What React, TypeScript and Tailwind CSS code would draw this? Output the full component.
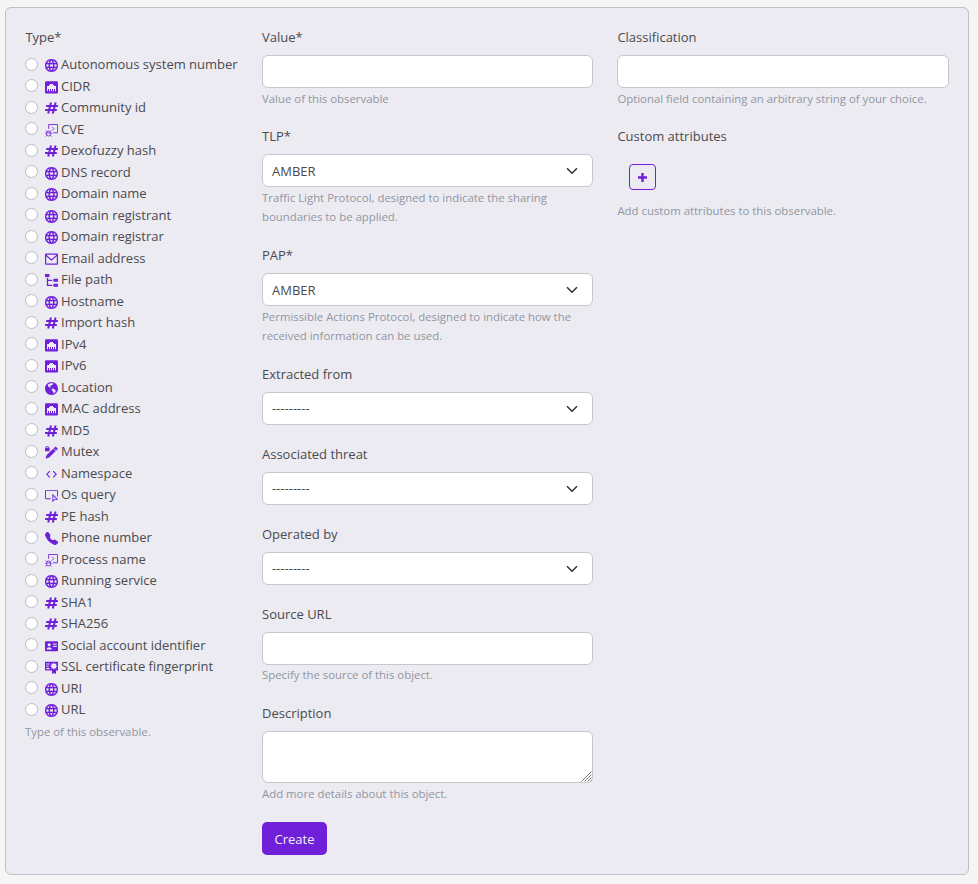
import type { ReactNode } from "react";
import { VscInspect } from "react-icons/vsc";
import { MdLanguage } from "react-icons/md";
import { BsTelephoneFill } from "react-icons/bs";
import { RiEarthFill } from "react-icons/ri";

type IconName =
  | "web" | "ethernet" | "hash" | "console" | "mail" | "tree" | "earth"
  | "mutex" | "code" | "inspect" | "phone" | "card" | "certificate";

const types: [string, IconName][] = [
  ["Autonomous system number", "web"],
  ["CIDR", "ethernet"],
  ["Community id", "hash"],
  ["CVE", "console"],
  ["Dexofuzzy hash", "hash"],
  ["DNS record", "web"],
  ["Domain name", "web"],
  ["Domain registrant", "web"],
  ["Domain registrar", "web"],
  ["Email address", "mail"],
  ["File path", "tree"],
  ["Hostname", "web"],
  ["Import hash", "hash"],
  ["IPv4", "ethernet"],
  ["IPv6", "ethernet"],
  ["Location", "earth"],
  ["MAC address", "ethernet"],
  ["MD5", "hash"],
  ["Mutex", "mutex"],
  ["Namespace", "code"],
  ["Os query", "inspect"],
  ["PE hash", "hash"],
  ["Phone number", "phone"],
  ["Process name", "console"],
  ["Running service", "web"],
  ["SHA1", "hash"],
  ["SHA256", "hash"],
  ["Social account identifier", "card"],
  ["SSL certificate fingerprint", "certificate"],
  ["URI", "web"],
  ["URL", "web"],
];

function Svg({ children }: { children: ReactNode }) {
  return (
    <svg width="13" height="13" viewBox="0 0 13 13" fill="none" stroke="currentColor">
      {children}
    </svg>
  );
}

function TypeIcon({ name }: { name: IconName }) {
  switch (name) {
    case "web":
      return <MdLanguage size={13} viewBox="2 2 20 20" stroke="currentColor" strokeWidth={0.3} />;
    case "ethernet":
      return (
        <Svg>
          <rect y=".2" width="13" height="12.2" rx="1.2" fill="currentColor" stroke="none" />
          <path d="M2 10.2V5h2V3.9h1V2.9h3v1h1V5h2v5.2h-1V8h-1v2.2H8V8H7v2.2H6V8H5v2.2H4V8H3v2.2z" fill="#ecebf2" stroke="none" />
        </Svg>
      );
    case "hash":
      return (
        <Svg>
          <path d="M6 .5 3.2 11.6M10.6 .5 7.8 11.6M1.2 4H12.9M.1 8.1h11.7" strokeWidth="2" />
        </Svg>
      );
    case "console":
      return (
        <Svg>
          <path d="M3.6 4.8V.5h8.9v8.3H7.6" strokeWidth=".85" />
          <path d="m7.2 2.9 1.7 1.7-1.7 1.7" strokeWidth=".8" />
          <rect x="1.7" y="7" width="3.6" height="5" rx="1.7" strokeWidth=".85" />
          <path d="M1.7 8.8h3.6M.1 9.7h1.5M5.4 9.7h1.5M.5 6.6l1.3 1.3M6.5 6.6 5.2 7.9M.5 12.5l1.3-1.2M6.5 12.5l-1.3-1.2" strokeWidth=".8" />
        </Svg>
      );
    case "mail":
      return (
        <Svg>
          <rect x=".6" y="1.1" width="11.8" height="10" rx=".4" strokeWidth="1.2" />
          <path d="m1 2.3 5.5 4.6L12 2.3" strokeWidth="1.2" />
        </Svg>
      );
    case "tree":
      return (
        <Svg>
          <path d="M0 0h4.4v3H0zM8.4 4.8H13v3H8.4zM8.4 9.8H13v3H8.4z" fill="currentColor" stroke="none" />
          <path d="M2.5 3.8v7.6h4.8M2.5 6.4h4.8" strokeWidth="1.3" />
        </Svg>
      );
    case "earth":
      return <RiEarthFill size={13} viewBox="2 2 20 20" />;
    case "mutex":
      return (
        <Svg>
          <path d="M10.6.9 12.5 2.8 4.5 10.8 1 12.2 2.2 9z" fill="currentColor" strokeWidth=".9" strokeLinejoin="round" />
          <path d="m8.6 2.5 2.3 2.3" stroke="#ecebf2" strokeWidth=".8" />
          <rect y="1.8" width="4.6" height="3.4" rx=".4" fill="currentColor" stroke="none" />
          <path d="M1 2V1.4a1.3 1.1 0 0 1 2.6 0V2" strokeWidth=".9" />
        </Svg>
      );
    case "code":
      return (
        <Svg>
          <path d="M4.8 3.2 1.8 6.3l3 3.1M8.2 3.2l3 3.1-3 3.1" strokeWidth="1.1" />
        </Svg>
      );
    case "inspect":
      return <VscInspect size={13} viewBox="1 1 14 14" />;
    case "phone":
      return <BsTelephoneFill size={13} />;
    case "card":
      return (
        <Svg>
          <rect y="1.3" width="13" height="10" rx=".8" fill="currentColor" stroke="none" />
          <circle cx="4.2" cy="4.8" r="1.5" fill="#ecebf2" stroke="none" />
          <path d="M1.6 9.6c0-3.2 5.2-3.2 5.2 0z" fill="#ecebf2" stroke="none" />
          <path d="M8 4.2h3.8M8 6.4h3.8" stroke="#ecebf2" strokeWidth="1" />
        </Svg>
      );
    case "certificate":
      return (
        <Svg>
          <path d="M0 .8h13v8.8h-2V13L9 11.9 7 13V9.6H0z" fill="currentColor" stroke="none" />
          <path d="M1.3 3h3.2M1.3 5.3h2.4M1.3 7.6h3.2" stroke="#ecebf2" strokeWidth="1.1" />
          <path d="m8.8 1.6.9 1.3 1.6-.3-.3 1.6 1.3.9-1.3.9.3 1.6-1.6-.3-.9 1.3-.9-1.3-1.6.3.3-1.6-1.3-.9 1.3-.9-.3-1.6 1.6.3z" fill="#ecebf2" stroke="none" />
        </Svg>
      );
  }
}

function Help({ children }: { children: ReactNode }) {
  return <p className="-mb-px pt-px text-[11.39px] leading-[19px] text-[#9196a1]">{children}</p>;
}

function Field({ label, tall, children }: { label: string; tall?: boolean; children: ReactNode }) {
  return (
    <div className={tall ? "mb-[19px]" : "mb-[18px]"}>
      <div className="mb-[7px] h-[22px] leading-[22px]">{label}</div>
      {children}
    </div>
  );
}

function Input() {
  return <div className="h-[33px] w-full rounded-[6px] border border-[#c8c7ce] bg-white" />;
}

function Select({ value }: { value: string }) {
  return (
    <div className="flex h-[33px] w-full items-center justify-between rounded-[6px] border border-[#c8c7ce] bg-white pr-[14px] pl-[9px]">
      <span className={value === "AMBER" ? "pt-[3px]" : "pt-px"}>{value}</span>
      <svg width="12" height="12" viewBox="0 0 16 16" fill="none" stroke="#343a40" strokeWidth="2.2" strokeLinecap="round" strokeLinejoin="round">
        <path d="m2 5 6 6 6-6" />
      </svg>
    </div>
  );
}

export default function App() {
  return (
    <div className="h-[884px] w-[978px] bg-[#f5f5f5] pt-[7px] pl-[5px] font-['Open_Sans',sans-serif] text-[13px] text-[#4a4a4f]">
      <div className="flex h-[868px] w-[964px] items-start rounded-[6px] border border-[#c0bfc8] bg-[#ecebf2] pt-[18px] pl-[19px]">
        <div className="w-[237px]">
          <div className="mb-[6px] h-[22px] pl-[0.4px] leading-[22px]">Type*</div>
          {types.map(([label, icon]) => (
            <div key={label} className="flex h-[21.5px] items-center whitespace-nowrap">
              <span className="mr-[7px] mb-[0.75px] size-[13px] rounded-full border border-[#bcbcc2] bg-white" />
              <span className="mt-[1.5px] mr-[3px] text-[#7020d9]">
                <TypeIcon name={icon} />
              </span>
              {label}
            </div>
          ))}
          <Help>Type of this observable.</Help>
        </div>

        <div className="w-[331px]">
          <Field label="Value*">
            <Input />
            <Help>Value of this observable</Help>
          </Field>
          <Field label="TLP*" tall>
            <Select value="AMBER" />
            <Help>Traffic Light Protocol, designed to indicate the sharing boundaries to be applied.</Help>
          </Field>
          <Field label="PAP*" tall>
            <Select value="AMBER" />
            <Help>Permissible Actions Protocol, designed to indicate how the received information can be used.</Help>
          </Field>
          <Field label="Extracted from">
            <Select value="---------" />
          </Field>
          <Field label="Associated threat">
            <Select value="---------" />
          </Field>
          <Field label="Operated by">
            <Select value="---------" />
          </Field>
          <Field label="Source URL">
            <Input />
            <div className="-mt-px pb-px">
              <Help>Specify the source of this object.</Help>
            </div>
          </Field>
          <Field label="Description">
            <div className="relative">
              <textarea className="block h-[52px] w-full resize-none rounded-[6px] border border-[#c8c7ce] bg-white" />
              <svg className="absolute right-[1px] bottom-[1px]" width="11" height="11" viewBox="0 0 11 11" stroke="#77777a" strokeWidth="1">
                <path d="M.5 10.5l10-10M3.5 10.5l7-7M6.5 10.5l4-4M9.5 10.5l1-1" />
              </svg>
            </div>
            <Help>Add more details about this object.</Help>
          </Field>
          <div className="pt-[2px]">
            <button className="h-[33px] w-[65px] rounded-[5px] bg-[#7020d9] pt-[2px] text-[#f3edfc]">Create</button>
          </div>
        </div>

        <div className="ml-[24.4px] w-[331.6px]">
          <Field label="Classification">
            <Input />
            <Help>Optional field containing an arbitrary string of your choice.</Help>
          </Field>
          <Field label="Custom attributes">
            <div className="px-[11.6px] pt-[10px] pb-[10px]">
              <button className="flex h-[26px] w-[27px] items-center justify-center rounded-[4px] border border-[#7020d9] text-[#7020d9]">
                <svg width="9" height="9" viewBox="0 0 9 9" stroke="currentColor" strokeWidth="2.4">
                  <path d="M4.5 0v9M0 4.5h9" />
                </svg>
              </button>
            </div>
            <Help>Add custom attributes to this observable.</Help>
          </Field>
        </div>
      </div>
    </div>
  );
}
